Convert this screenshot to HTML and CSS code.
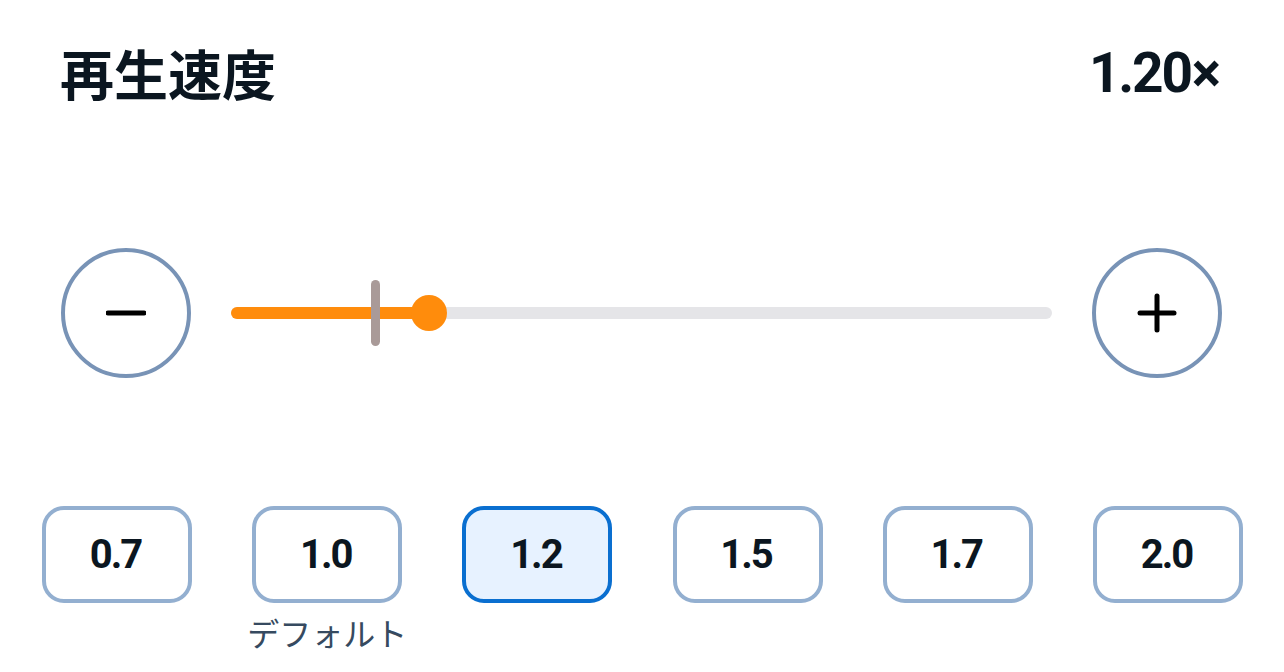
FILE: index.html
```html
<!DOCTYPE html>
<html lang="ja">
<head>
<meta charset="utf-8">
<title>再生速度</title>
<link rel="stylesheet" href="styles.css">
</head>
<body>
<main class="speed-panel">
  <header class="header">
    <h1 class="title">再生速度</h1>
    <div class="value">1.20<span class="times">×</span></div>
  </header>

  <section class="slider-row">
    <button class="round-btn" aria-label="減速">
      <svg width="40" height="40" viewBox="0 0 40 40"><line x1="2" y1="20" x2="38" y2="20" stroke="#000" stroke-width="5" stroke-linecap="round"/></svg>
    </button>
    <div class="track">
      <div class="track-fill"></div>
      <div class="default-mark"></div>
      <div class="thumb"></div>
    </div>
    <button class="round-btn" aria-label="加速">
      <svg width="40" height="40" viewBox="0 0 40 40"><line x1="3" y1="20" x2="37" y2="20" stroke="#000" stroke-width="5" stroke-linecap="round"/><line x1="20" y1="3" x2="20" y2="37" stroke="#000" stroke-width="5" stroke-linecap="round"/></svg>
    </button>
  </section>

  <section class="presets">
    <div class="preset"><button class="preset-btn">0.7</button></div>
    <div class="preset"><button class="preset-btn">1.0</button><span class="preset-label">デフォルト</span></div>
    <div class="preset"><button class="preset-btn selected">1.2</button></div>
    <div class="preset"><button class="preset-btn">1.5</button></div>
    <div class="preset"><button class="preset-btn">1.7</button></div>
    <div class="preset"><button class="preset-btn">2.0</button></div>
  </section>
</main>
</body>
</html>
```

FILE: styles.css
```css
* { box-sizing: border-box; }
html, body { margin: 0; background: #ffffff; }
body {
  font-family: Roboto, "Noto Sans CJK JP", sans-serif;
  color: #0b1620;
  width: 1284px;
  height: 672px;
  overflow: hidden;
}

.header {
  height: 146px;
  padding: 0 63px 0 60px;
  display: flex;
  justify-content: space-between;
  align-items: center;
}
.title {
  margin: 0;
  font-family: "Noto Sans CJK JP", sans-serif;
  font-size: 54px;
  font-weight: 700;
  line-height: 1;
}
.value {
  font-family: Roboto, sans-serif;
  font-size: 55px;
  font-weight: 700;
  line-height: 1;
  letter-spacing: -2.2px;
}
.times {
  letter-spacing: 0;
  margin-left: 1px;
}

.slider-row {
  margin-top: 102px;
  padding: 0 62px 0 61px;
  display: flex;
  align-items: center;
  gap: 40px;
}
.round-btn {
  width: 130px;
  height: 130px;
  flex: none;
  border: 4px solid #7893b6;
  border-radius: 50%;
  background: #fff;
  display: flex;
  align-items: center;
  justify-content: center;
  padding: 0;
}
.track {
  position: relative;
  flex: 1;
  height: 12px;
  border-radius: 6px;
  background: #e5e5e8;
}
.track-fill {
  width: 24.1%;
  height: 100%;
  border-radius: 6px;
  background: #ff8c0c;
}
.default-mark {
  position: absolute;
  left: 17.6%;
  top: -27px;
  width: 9px;
  height: 66px;
  margin-left: -4px;
  border-radius: 5px;
  background: #a99a98;
}
.thumb {
  position: absolute;
  left: 24.1%;
  top: 50%;
  width: 36px;
  height: 36px;
  margin: -18px 0 0 -18px;
  border-radius: 50%;
  background: #ff8c0c;
}

.presets {
  margin-top: 128px;
  padding: 0 41px 0 42px;
  display: flex;
  justify-content: space-between;
}
.preset {
  width: 150px;
  display: flex;
  flex-direction: column;
  align-items: center;
}
.preset-btn {
  width: 150px;
  height: 97px;
  border: 4px solid #93afd0;
  border-radius: 22px;
  background: #fff;
  font-family: Roboto, sans-serif;
  font-size: 40px;
  font-weight: 700;
  letter-spacing: -2px;
  color: #0b1620;
  padding: 0 3px 0 0;
}
.preset-btn.selected {
  border-color: #0a6fd0;
  background: #e7f2ff;
}
.preset-label {
  margin-top: 12px;
  font-family: "Noto Sans CJK JP", sans-serif;
  font-size: 32px;
  line-height: 1.1;
  color: #364a60;
  white-space: nowrap;
}
```
